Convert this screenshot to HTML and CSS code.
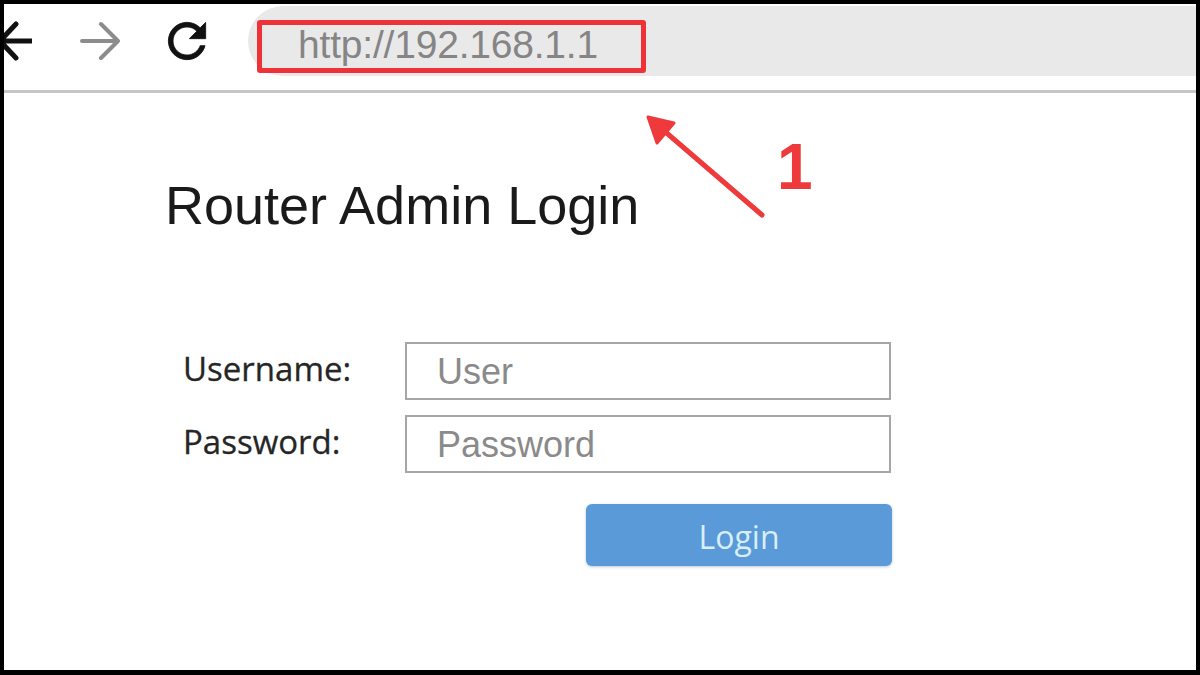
FILE: index.html
```html
<!DOCTYPE html>
<html lang="en">
<head>
<meta charset="utf-8">
<title>Router Admin Login</title>
<link rel="stylesheet" href="styles.css">
</head>
<body>
<div class="frame">
  <div class="page">
    <header class="toolbar">
      <svg class="nav-back" width="34" height="40" viewBox="0 0 34 40" aria-hidden="true">
        <path d="M2 20H34M18 3L2 20L18 37" fill="none" stroke="#111" stroke-width="5" stroke-linecap="round" stroke-linejoin="round"/>
      </svg>
      <svg class="nav-fwd" width="40" height="40" viewBox="0 0 40 40" aria-hidden="true">
        <path d="M2 20H38M21 3L38 20L21 37" fill="none" stroke="#8c8c8c" stroke-width="4" stroke-linecap="round" stroke-linejoin="round"/>
      </svg>
      <svg class="nav-reload" width="56" height="56" viewBox="0 0 24 24" aria-hidden="true">
        <path fill="#111" stroke="#111" stroke-width="0.35" d="M17.65 6.35C16.2 4.9 14.21 4 12 4c-4.42 0-7.99 3.58-7.99 8s3.57 8 7.99 8c3.730 0 6.84-2.55 7.73-6h-2.08c-.82 2.33-3.04 4-5.65 4-3.31 0-6-2.69-6-6s2.690-6 6-6c1.66 0 3.14.69 4.22 1.78L13 11h7V4l-2.35 2.35z"/>
      </svg>
      <div class="address">
        <span class="url-box">http://192.168.1.1</span>
      </div>
    </header>
    <main class="content">
      <h1 class="title">Router Admin Login</h1>
      <div class="form">
        <span class="label">Username:</span>
        <div class="field">User</div>
        <span class="label">Password:</span>
        <div class="field">Password</div>
        <button class="login" type="button">Login</button>
      </div>
    </main>
    <svg class="pointer" width="140" height="120" viewBox="0 0 140 120" aria-hidden="true">
      <line x1="128" y1="111" x2="28" y2="25" stroke="#ee3a3a" stroke-width="5" stroke-linecap="round"/>
      <polygon points="14,13 40,19 23,39" fill="#ee3a3a" stroke="#ee3a3a" stroke-width="3" stroke-linejoin="round"/>
    </svg>
    <span class="step">1</span>
  </div>
</div>
</body>
</html>
```

FILE: styles.css
```css
* { box-sizing: border-box; }

html, body {
  margin: 0;
  padding: 0;
  background: #000;
}

.frame {
  width: 1200px;
  height: 675px;
  padding: 4px 4px 5px 4px;
  background: #000;
}

.page {
  position: relative;
  width: 100%;
  height: 100%;
  background: #fff;
  overflow: hidden;
  display: flex;
  flex-direction: column;
}

.toolbar {
  height: 89px;
  flex: none;
  display: flex;
  align-items: center;
  padding-bottom: 13px;
  border-bottom: 3px solid #c6c6c6;
}

.nav-back {
  flex: none;
  margin-left: -6px;
}

.nav-fwd {
  flex: none;
  margin-left: 48px;
}

.nav-reload {
  flex: none;
  margin-left: 39px;
}

.address {
  flex: 1;
  align-self: flex-start;
  margin-top: 2px;
  margin-left: 33px;
  height: 70px;
  background: #e9e9e9;
  border-radius: 35px 0 0 35px;
  padding: 14px 0 0 9px;
}

.url-box {
  display: block;
  width: 389px;
  height: 53px;
  border: 5px solid #ee3237;
  border-radius: 3px;
  padding-left: 36px;
  font-family: "Liberation Sans", Arial, sans-serif;
  font-size: 39px;
  line-height: 40px;
  color: #858585;
  letter-spacing: -0.2px;
}

.content {
  flex: 1;
  padding: 80px 0 0 161px;
}

.title {
  margin: 0;
  font-family: "Liberation Sans", Arial, sans-serif;
  font-weight: normal;
  font-size: 54px;
  line-height: 64px;
  color: #1a1a1a;
}

.form {
  margin: 105px 0 0 18px;
  display: grid;
  grid-template-columns: 222px 486px;
  row-gap: 15px;
  align-items: center;
}

.label {
  font-family: "Open Sans", "DejaVu Sans", sans-serif;
  font-size: 33px;
  line-height: 40px;
  color: #262626;
  margin-top: -4px;
  -webkit-text-stroke: 0.3px #262626;
}

.field {
  height: 58px;
  border: 2px solid #a6a6a6;
  padding-left: 30px;
  font-family: "Liberation Sans", Arial, sans-serif;
  font-size: 36px;
  line-height: 56px;
  color: #8a8a8a;
}

.login {
  grid-column: 2;
  justify-self: end;
  margin: 16px -1px 0 0;
  width: 306px;
  height: 62px;
  border: none;
  border-radius: 6px;
  background: #5a9ad8;
  box-shadow: 0 1px 3px rgba(60, 100, 150, 0.35);
  font-family: "Open Sans", "DejaVu Sans", sans-serif;
  font-size: 32px;
  color: #d8eefb;
  padding: 2px 0 0 0;
}

.pointer {
  position: absolute;
  left: 630px;
  top: 100px;
}

.step {
  position: absolute;
  left: 773px;
  top: 128px;
  font-family: "Liberation Sans", Arial, sans-serif;
  font-weight: bold;
  font-size: 64px;
  line-height: 70px;
  color: #ee3a3a;
}
```
